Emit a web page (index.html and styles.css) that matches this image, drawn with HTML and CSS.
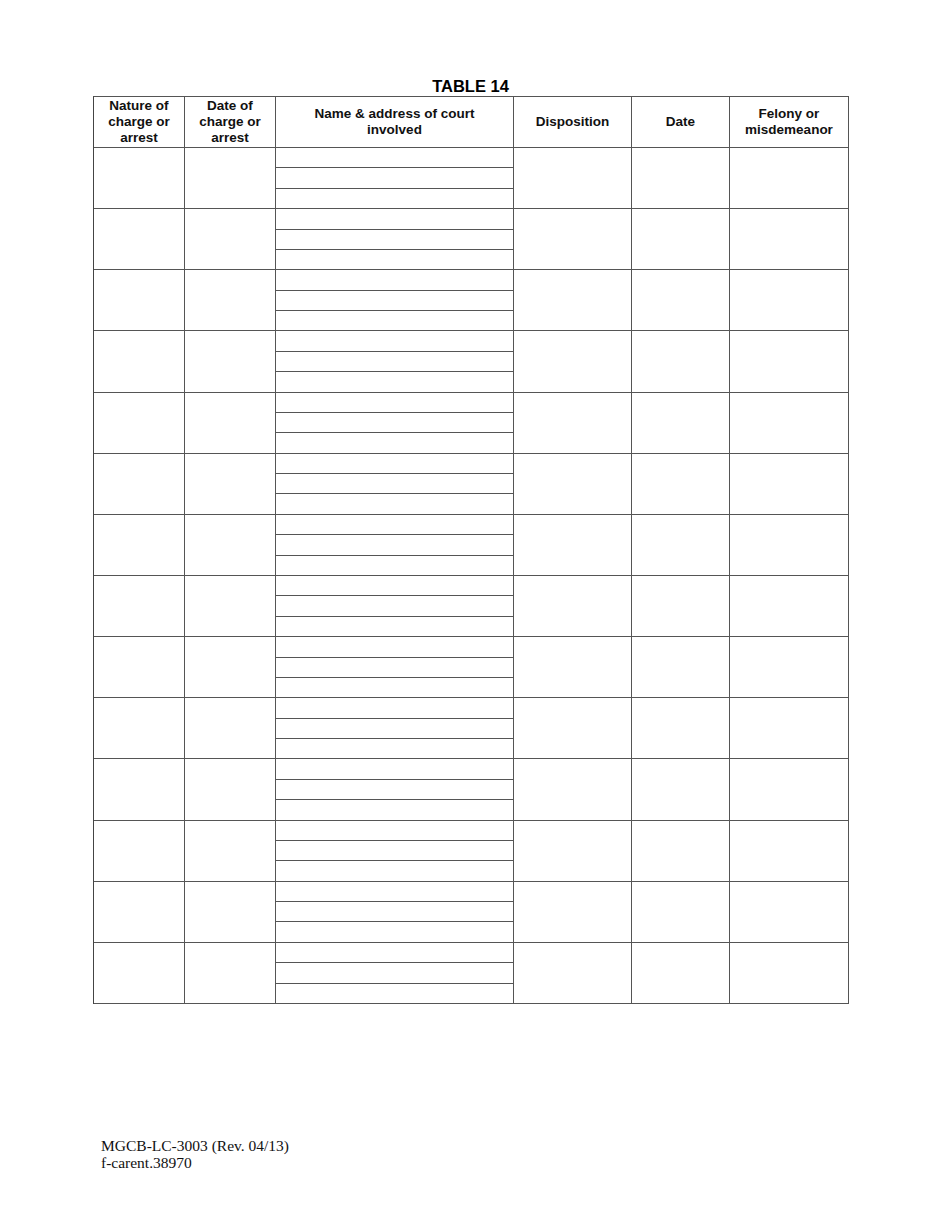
FILE: index.html
```html
<!DOCTYPE html>
<html>
<head>
<meta charset="utf-8">
<link rel="stylesheet" href="styles.css">
</head>
<body>
<div class="page">
  <div class="title">TABLE 14</div>
  <div class="grid" id="grid">
    <div class="cell head">Nature of<br>charge or<br>arrest</div>
    <div class="cell head">Date of<br>charge or<br>arrest</div>
    <div class="cell head">Name &amp; address of court<br>involved</div>
    <div class="cell head">Disposition</div>
    <div class="cell head">Date</div>
    <div class="cell head">Felony or<br>misdemeanor</div>
  </div>
  <div class="footer">MGCB-LC-3003 (Rev. 04/13)<br>f-carent.38970</div>
</div>
<script>
  var g = document.getElementById('grid');
  for (var i = 0; i < 14; i++) {
    for (var c = 0; c < 6; c++) {
      var d = document.createElement('div');
      d.className = 'cell';
      if (c === 2) {
        d.className = 'cell split';
        for (var k = 0; k < 3; k++) {
          var s = document.createElement('div');
          s.className = 'sub';
          d.appendChild(s);
        }
      }
      g.appendChild(d);
    }
  }
</script>
</body>
</html>
```

FILE: styles.css
```css
html, body {
  margin: 0;
  padding: 0;
  background: #fff;
}
.page {
  width: 950px;
  padding-top: 76px;
  padding-left: 93px;
  box-sizing: border-box;
}
.title {
  width: 755px;
  text-align: center;
  font-family: "Liberation Sans", Arial, sans-serif;
  font-weight: bold;
  font-size: 16.5px;
  line-height: 20px;
  color: #000;
}
.grid {
  display: grid;
  width: 756px;
  height: 908px;
  box-sizing: border-box;
  grid-template-columns: 91px 91px 238px 118px 98px 119px;
  grid-template-rows: 51px repeat(14, 1fr);
  border-top: 1px solid #555;
  border-left: 1px solid #444;
}
.cell {
  box-sizing: border-box;
  border-right: 1px solid #555;
  border-bottom: 1px solid #555;
}
.head {
  display: flex;
  align-items: center;
  justify-content: center;
  text-align: center;
  font-family: "Liberation Sans", Arial, sans-serif;
  font-weight: bold;
  font-size: 13.5px;
  line-height: 16px;
  color: #111;
}
.split {
  display: flex;
  flex-direction: column;
}
.sub {
  flex: 1;
}
.sub + .sub {
  border-top: 1px solid #555;
}
.footer {
  margin-top: 133px;
  margin-left: 8px;
  font-family: "Liberation Serif", "Times New Roman", serif;
  font-size: 15.5px;
  line-height: 17px;
  color: #111;
}
```
